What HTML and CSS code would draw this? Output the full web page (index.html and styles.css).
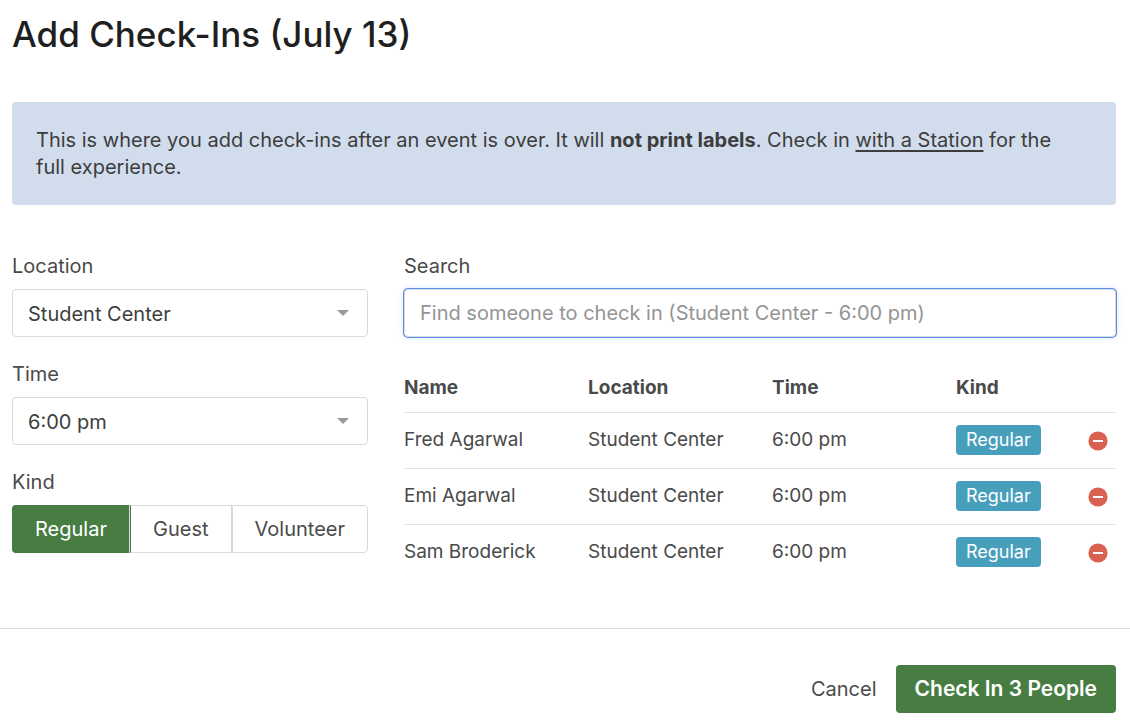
FILE: index.html
```html
<!DOCTYPE html>
<html lang="en">
<head>
    <meta charset="utf-8">
    <meta name="viewport" content="width=device-width, initial-scale=1">
    <title>Add Check-Ins</title>
    <link rel="stylesheet" href="styles.css">
</head>

<body>
    <form id="checkinForm">
        <main class="content">
            <h1>Add Check-Ins (July 13)</h1>

            <p class="notice">This is where you add check-ins after an event is over. It will <strong>not print labels</strong>. Check in <a href="#station">with a Station</a> for the full experience.</p>

            <div class="columns">
                <div class="options">
                    <div class="field">
                        <label for="location">Location</label>
                        <div class="select">
                            <select id="location">
                                <option>Student Center</option>
                            </select>
                        </div>
                    </div>
                    <div class="field">
                        <label for="time">Time</label>
                        <div class="select">
                            <select id="time">
                                <option>6:00 pm</option>
                            </select>
                        </div>
                    </div>
                    <fieldset class="field">
                        <legend>Kind</legend>
                        <div class="segments">
                            <input type="radio" name="kind" id="regular" checked>
                            <label for="regular">Regular</label>
                            <input type="radio" name="kind" id="guest">
                            <label for="guest">Guest</label>
                            <input type="radio" name="kind" id="volunteer">
                            <label for="volunteer">Volunteer</label>
                        </div>
                    </fieldset>
                </div>

                <div class="people">
                    <div class="field">
                        <label for="search">Search</label>
                        <input type="text" id="search" class="search" placeholder="Find someone to check in (Student Center - 6:00 pm)">
                    </div>
                    <table>
                        <thead>
                            <tr>
                                <th class="col">Name</th>
                                <th class="col">Location</th>
                                <th class="col">Time</th>
                                <th>Kind</th>
                                <th class="remove-col"></th>
                            </tr>
                        </thead>
                        <tbody>
                            <tr>
                                <td>Fred Agarwal</td>
                                <td>Student Center</td>
                                <td>6:00 pm</td>
                                <td><span class="badge">Regular</span></td>
                                <td class="remove-col">
                                    <button type="button" class="remove" aria-label="Remove Fred Agarwal">
                                        <svg width="20" height="20" viewBox="0 0 20 20"><circle cx="10" cy="10" r="9.6" fill="#d8624f"/><rect x="5" y="9" width="10" height="2" fill="#fff"/></svg>
                                    </button>
                                </td>
                            </tr>
                            <tr>
                                <td>Emi Agarwal</td>
                                <td>Student Center</td>
                                <td>6:00 pm</td>
                                <td><span class="badge">Regular</span></td>
                                <td class="remove-col">
                                    <button type="button" class="remove" aria-label="Remove Emi Agarwal">
                                        <svg width="20" height="20" viewBox="0 0 20 20"><circle cx="10" cy="10" r="9.6" fill="#d8624f"/><rect x="5" y="9" width="10" height="2" fill="#fff"/></svg>
                                    </button>
                                </td>
                            </tr>
                            <tr>
                                <td>Sam Broderick</td>
                                <td>Student Center</td>
                                <td>6:00 pm</td>
                                <td><span class="badge">Regular</span></td>
                                <td class="remove-col">
                                    <button type="button" class="remove" aria-label="Remove Sam Broderick">
                                        <svg width="20" height="20" viewBox="0 0 20 20"><circle cx="10" cy="10" r="9.6" fill="#d8624f"/><rect x="5" y="9" width="10" height="2" fill="#fff"/></svg>
                                    </button>
                                </td>
                            </tr>
                        </tbody>
                    </table>
                </div>
            </div>
        </main>

        <footer class="actions">
            <button type="button" class="cancel">Cancel</button>
            <button type="submit" class="submit">Check In 3 People</button>
        </footer>
    </form>
</body>
</html>
```

FILE: styles.css
```css
* {
    box-sizing: border-box;
}
body {
    font-family: Inter, sans-serif;
    font-size: 20px;
    line-height: 24px;
    margin: 0;
    color: #4a4a4a;
    background-color: #fff;
}
input, select, button {
    font: inherit;
    color: inherit;
}
.content {
    padding: 12px 14px 48px 12px;
}
h1 {
    margin: 0 0 46px;
    font-size: 35px;
    line-height: 44px;
    font-weight: 500;
    color: #1f1f1f;
}
.notice {
    margin: 0 0 49px;
    padding: 25px 40px 24px 24px;
    line-height: 27px;
    color: #3d3d3d;
    background-color: #d1dcec;
    border-radius: 4px;
}
.notice a {
    color: inherit;
    text-underline-offset: 3px;
}
.columns {
    display: grid;
    grid-template-columns: 1fr 2fr;
    gap: 36px;
}
.field {
    margin: 0 0 25px;
    padding: 0;
    border: none;
}
.field > label,
legend {
    display: block;
    padding: 0;
    margin-bottom: 11px;
}

/* drop-downs */
.select {
    position: relative;
}
.select::after {
    content: "";
    position: absolute;
    top: 21px;
    right: 19px;
    border: 6px solid transparent;
    border-top-color: #999;
    border-bottom: none;
    pointer-events: none;
}
select {
    appearance: none;
    display: block;
    width: 100%;
    height: 48px;
    padding: 2px 15px 0;
    color: #3d3d3d;
    background-color: #fff;
    border: 1px solid #dadada;
    border-radius: 4px;
}

/* kind picker */
.segments {
    display: flex;
}
.segments input {
    position: absolute;
    opacity: 0;
    pointer-events: none;
}
.segments label {
    flex: auto;
    padding: 11px 20px;
    text-align: center;
    border: 1px solid #dadada;
    cursor: pointer;
}
.segments label:first-of-type {
    border-radius: 4px 0 0 4px;
}
.segments label:last-of-type {
    border-radius: 0 4px 4px 0;
}
.segments input:checked + label {
    color: #fff;
    background-color: #477d43;
    border-color: #477d43;
    border-right-color: #dadada;
}
.segments input:checked + label + input + label {
    border-left-color: #477d43;
}

.search {
    display: block;
    width: 100%;
    height: 48px;
    padding: 0 15px;
    border: 1px solid #dadada;
    border-radius: 4px;
    outline: none;
    box-shadow: 0 0 0 1px #5b8def, 0 0 6px 1px #dbe7fb;
}
.search::placeholder {
    color: #949494;
    opacity: 1;
}

table {
    width: 100%;
    table-layout: fixed;
    border-collapse: collapse;
    font-size: 19px;
}
th, td {
    padding: 0;
    text-align: left;
}
th {
    height: 50px;
    padding-top: 2px;
    font-weight: 700;
}
td {
    height: 56px;
    border-top: 1px solid #e4e4e4;
}
.col {
    width: 184px;
}
.remove-col {
    width: 40px;
    padding-right: 8px;
    text-align: right;
}
.badge {
    display: inline-block;
    padding: 3px 10px;
    font-size: 18px;
    color: #fff;
    background-color: #489fbb;
    border-radius: 4px;
}
.remove {
    padding: 0;
    border: none;
    background: none;
    vertical-align: middle;
    cursor: pointer;
}
.remove svg {
    display: block;
}

.actions {
    display: flex;
    justify-content: flex-end;
    padding: 36px 14px 9px;
    border-top: 1px solid #dadada;
}
.actions button {
    height: 48px;
    padding: 0 19px;
    border: none;
    border-radius: 4px;
    background: none;
    cursor: pointer;
}
.actions .submit {
    font-size: 21px;
    font-weight: 600;
    color: #fff;
    background-color: #477d43;
}
```
